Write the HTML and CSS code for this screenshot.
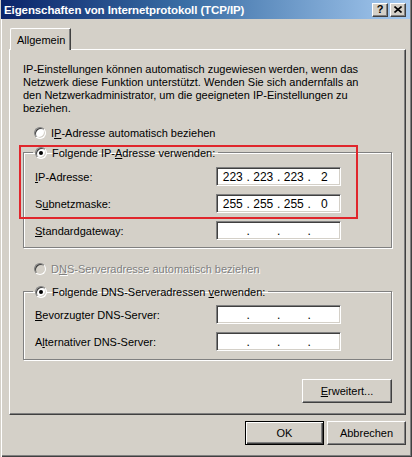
FILE: index.html
```html
<!DOCTYPE html>
<html lang="de">
<head>
<meta charset="utf-8">
<title>Eigenschaften von Internetprotokoll (TCP/IP)</title>
<link rel="stylesheet" href="styles.css">
</head>
<body>
<div class="window">
  <div class="titlebar">
    <span class="title">Eigenschaften von Internetprotokoll (TCP/IP)</span>
    <div class="tb-btns">
      <span class="tb-btn help">?</span>
      <span class="tb-btn close"><svg width="8" height="7" viewBox="0 0 8 7"><path d="M0.5 0.5 L7.5 6.5 M7.5 0.5 L0.5 6.5" stroke="#000" stroke-width="1.6" fill="none"/></svg></span>
    </div>
  </div>
  <div class="client">
    <div class="tabs"><div class="tab">Allgemein</div></div>
    <div class="panel">
      <p class="intro">IP-Einstellungen können automatisch zugewiesen werden, wenn das<br>Netzwerk diese Funktion unterstützt. Wenden Sie sich andernfalls an<br>den Netzwerkadministrator, um die geeigneten IP-Einstellungen zu<br>beziehen.</p>

      <div class="radio-row first"><span class="radio"></span><span>I<u>P</u>-Adresse automatisch beziehen</span></div>

      <fieldset class="group g1">
        <legend><span class="radio on"></span><span>Folgende IP-<u>A</u>dresse verwenden:</span></legend>
        <div class="rows">
          <span class="lbl"><u>I</u>P-Adresse:</span>
          <div class="ipfield"><span class="oct">223</span><span class="dot">.</span><span class="oct">223</span><span class="dot">.</span><span class="oct">223</span><span class="dot">.</span><span class="oct">2</span></div>
          <span class="lbl">S<u>u</u>bnetzmaske:</span>
          <div class="ipfield"><span class="oct">255</span><span class="dot">.</span><span class="oct">255</span><span class="dot">.</span><span class="oct">255</span><span class="dot">.</span><span class="oct">0</span></div>
          <span class="lbl"><u>S</u>tandardgateway:</span>
          <div class="ipfield"><span class="oct"></span><span class="dot">.</span><span class="oct"></span><span class="dot">.</span><span class="oct"></span><span class="dot">.</span><span class="oct"></span></div>
        </div>
      </fieldset>

      <div class="radio-row disabled"><span class="radio"></span><span>D<u>N</u>S-Serveradresse automatisch beziehen</span></div>

      <fieldset class="group g2">
        <legend><span class="radio on"></span><span>Folgende DNS-Serveradressen <u>v</u>erwenden:</span></legend>
        <div class="rows">
          <span class="lbl"><u>B</u>evorzugter DNS-Server:</span>
          <div class="ipfield"><span class="oct"></span><span class="dot">.</span><span class="oct"></span><span class="dot">.</span><span class="oct"></span><span class="dot">.</span><span class="oct"></span></div>
          <span class="lbl">A<u>l</u>ternativer DNS-Server:</span>
          <div class="ipfield"><span class="oct"></span><span class="dot">.</span><span class="oct"></span><span class="dot">.</span><span class="oct"></span><span class="dot">.</span><span class="oct"></span></div>
        </div>
      </fieldset>

      <div class="adv-row"><button class="btn adv"><u>E</u>rweitert...</button></div>
    </div>
    <div class="footer">
      <button class="btn default">OK</button>
      <button class="btn">Abbrechen</button>
    </div>
  </div>
  <div class="annot"></div>
</div>
</body>
</html>
```

FILE: styles.css
```css
html, body {
  margin: 0;
  padding: 0;
  background: #d4d0c8;
}
body {
  font-family: "Liberation Sans", Arial, sans-serif;
  font-size: 11px;
  color: #000;
}
.window {
  position: relative;
  width: 412px;
  height: 457px;
  box-sizing: border-box;
  padding: 0 3px 3px 3px;
  background: #d4d0c8;
  box-shadow: inset 1px 0 0 #d4d0c8, inset 2px 0 0 #fff, inset -1px -1px 0 #404040, inset -2px -2px 0 #808080;
}
.titlebar {
  height: 19px;
  margin: 0 -1px 0 -2px;
  padding: 0 4px 0 3px;
  display: flex;
  align-items: center;
  justify-content: space-between;
  background: linear-gradient(to right, #0a246a 0%, #3a6ea5 45%, #a6caf0 100%);
}
.title {
  color: #fff;
  font-weight: bold;
  font-size: 11.5px;
  letter-spacing: -0.1px;
}
.tb-btns {
  display: flex;
  gap: 2px;
}
.tb-btn {
  width: 16px;
  height: 14px;
  box-sizing: border-box;
  display: flex;
  align-items: center;
  justify-content: center;
  background: #d4d0c8;
  border: 1px solid;
  border-color: #fff #404040 #404040 #fff;
  box-shadow: inset -1px -1px 0 #808080;
  font-weight: bold;
  font-size: 11px;
  line-height: 1;
}
.client {
  padding: 0 3px 0 6px;
}
.tabs {
  display: flex;
  margin-top: 9px;
  padding-left: 1px;
}
.tab {
  position: relative;
  z-index: 1;
  width: 61px;
  height: 22px;
  box-sizing: border-box;
  margin-bottom: -1px;
  padding-left: 6px;
  display: flex;
  align-items: center;
  background: #d4d0c8;
  border-top: 1px solid #fff;
  border-left: 1px solid #fff;
  border-right: 1px solid #404040;
  border-top-left-radius: 2px;
  box-shadow: inset -1px 0 0 #808080;
}
.panel {
  height: 366px;
  box-sizing: border-box;
  padding: 13px 13px 0 13px;
  border-top: 1px solid #fff;
  border-left: 1px solid #fff;
  border-right: 1px solid #404040;
  border-bottom: 1px solid #404040;
  box-shadow: inset -1px -1px 0 #808080;
}
.intro {
  margin: 0;
  line-height: 13px;
}
.radio-row {
  display: flex;
  align-items: center;
  gap: 5px;
  height: 13px;
  padding-left: 11px;
}
.radio-row.first {
  margin-top: 11px;
}
.radio {
  position: relative;
  flex: none;
  width: 12px;
  height: 12px;
  box-sizing: border-box;
  border-radius: 50%;
  background: #fff;
  border: 1px solid;
  border-color: #808080 #fff #fff #808080;
  box-shadow: inset 1px 1px 0 #404040, inset -1px -1px 0 #d4d0c8;
}
.radio.on::after {
  content: "";
  position: absolute;
  left: 3px;
  top: 3px;
  width: 4px;
  height: 4px;
  border-radius: 50%;
  background: #000;
}
.radio-row.disabled {
  margin-top: 14px;
  color: #808080;
  text-shadow: 1px 1px 0 #fff;
}
.radio-row.disabled .radio {
  background: #d4d0c8;
}
.group {
  margin: 7px 0 0 0;
  padding: 8px 0 7px 11px;
  min-width: 0;
  border: 1px solid #808080;
  box-shadow: inset 1px 1px 0 #fff, 1px 1px 0 #fff;
}
.group .rows {
  row-gap: 8px;
}
.group.g2 {
  margin-top: 10px;
  padding-top: 7px;
  padding-bottom: 8px;
}
.group legend {
  display: flex;
  align-items: center;
  gap: 5px;
  height: 13px;
  margin-left: -2px;
  padding: 0 3px 0 2px;
}
.rows {
  display: grid;
  grid-template-columns: 181px 125px;
  align-items: center;
}
.ipfield {
  height: 19px;
  box-sizing: border-box;
  display: flex;
  align-items: center;
  padding: 0 2px;
  background: #fff;
  border: 1px solid;
  border-color: #808080 #fff #fff #808080;
  box-shadow: inset 1px 1px 0 #404040, inset -1px -1px 0 #d4d0c8;
  font-size: 12px;
}
.oct {
  width: 28px;
  text-align: center;
}
.dot {
  width: 3px;
  text-align: center;
}
.adv-row {
  display: flex;
  justify-content: flex-end;
  margin-top: 19px;
}
.btn {
  font-family: "Liberation Sans", Arial, sans-serif;
  font-size: 11px;
  color: #000;
  height: 24px;
  padding: 0;
  background: #d4d0c8;
  border: 1px solid;
  border-color: #fff #404040 #404040 #fff;
  box-shadow: inset -1px -1px 0 #808080;
}
.btn.adv {
  width: 90px;
}
.footer {
  display: flex;
  justify-content: flex-end;
  gap: 3px;
  margin-top: 6px;
}
.footer .btn {
  width: 79px;
}
.btn.default {
  border: 1px solid #000;
  box-shadow: inset 1px 1px 0 #fff, inset -1px -1px 0 #404040, inset -2px -2px 0 #808080;
}
.annot {
  position: absolute;
  left: 19px;
  top: 145px;
  width: 339px;
  height: 74px;
  box-sizing: border-box;
  border: 2px solid #e0262c;
  pointer-events: none;
}
```
